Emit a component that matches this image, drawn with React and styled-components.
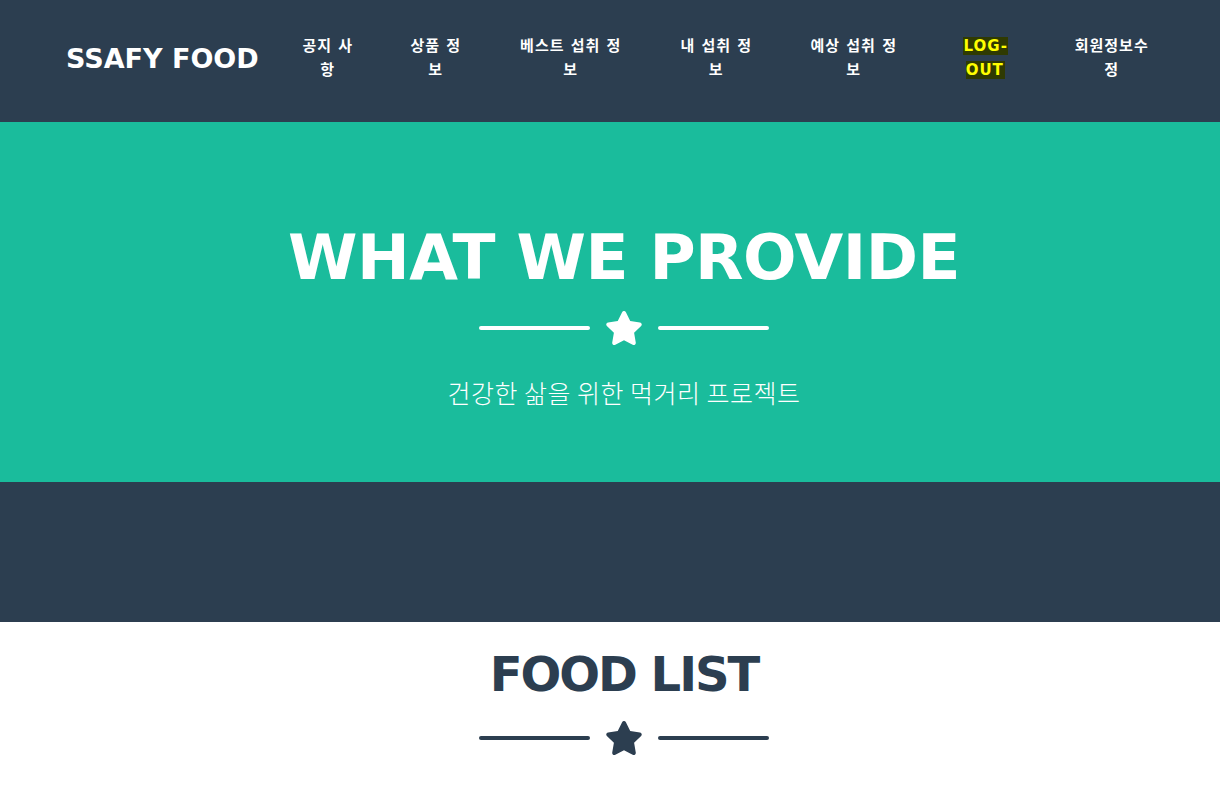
import React from 'react';
import styled, { createGlobalStyle } from 'styled-components';

const GlobalStyle = createGlobalStyle`
    html, body {
        margin: 0;
        padding: 0;
        background: #ffffff;
        overflow-x: hidden;
    }
    body {
        font-family: "DejaVu Sans", "Noto Sans CJK KR", sans-serif;
    }
`;

const Page = styled.div`
    min-width: 1248px;
`;

const Navbar = styled.nav`
    height: 122px;
    background: #2c3e50;
    display: flex;
    align-items: center;
    padding: 0 0 6px 66px;
    box-sizing: border-box;
`;
const Brand = styled.a`
    color: #ffffff;
    font-family: "DejaVu Sans", "Noto Sans CJK KR", sans-serif;
    font-weight: 700;
    font-size: 27px;
    text-decoration: none;
    white-space: nowrap;
    margin-right: 15px;
`;
const NavList = styled.ul`
    display: flex;
    align-items: center;
    list-style: none;
    margin: 0;
    padding: 0;
`;
const NavItem = styled.li`
    padding: 0 ${props => props.pad || 26}px;
`;
const NavLink = styled.a`
    display: block;
    width: ${props => props.w}px;
    text-align: center;
    color: #ffffff;
    font-family: "DejaVu Sans", "Noto Sans CJK KR", sans-serif;
    font-weight: 700;
    font-size: 15px;
    letter-spacing: 1px;
    line-height: 24px;
    text-decoration: none;
`;
const Mark = styled.mark`
    background: #2f3a02;
    color: #ffff00;
    padding: 0 1px;
`;

const Masthead = styled.header`
    background: #1abc9c;
    height: 360px;
    padding-top: 104px;
    box-sizing: border-box;
    text-align: center;
    color: #ffffff;
`;
const MastheadHeading = styled.h1`
    margin: 0;
    font-family: "DejaVu Sans", sans-serif;
    font-weight: 700;
    font-size: 63px;
    line-height: 64px;
    letter-spacing: -0.5px;
`;
const Divider = styled.div`
    display: flex;
    align-items: center;
    justify-content: center;
    margin: ${props => props.m || '21px 0 0'};
`;
const DividerLine = styled.span`
    width: 111px;
    height: 4px;
    border-radius: 4px;
    background: ${props => props.color};
`;
const StarIcon = styled.svg`
    width: 36px;
    height: 34px;
    margin: 0 16px;
    fill: ${props => props.color};
`;
const Subheading = styled.p`
    margin: 30px 0 0;
    font-family: "Noto Sans CJK KR", sans-serif;
    font-weight: 300;
    font-size: 25px;
    line-height: 34px;
    letter-spacing: 0.5px;
`;

const DarkBand = styled.section`
    height: 140px;
    background: #2c3e50;
`;

const Section = styled.section`
    padding-top: 27px;
    text-align: center;
`;
const SectionHeading = styled.h2`
    margin: 0;
    color: #2c3e50;
    font-family: "DejaVu Sans", sans-serif;
    font-weight: 700;
    font-size: 48px;
    line-height: 50px;
    letter-spacing: -2px;
`;

const Star = ({ color }) => (
    <StarIcon color={color} viewBox="20 0 536 512">
        <path d="M259.3 17.8L194 150.2 47.9 171.5c-26.2 3.8-36.7 36.1-17.7 54.6l105.7 103-25 145.5c-4.5 26.3 23.2 46 46.4 33.7L288 439.6l130.7 68.7c23.2 12.2 50.9-7.4 46.4-33.7l-25-145.5 105.7-103c19-18.5 8.5-50.8-17.7-54.6L382 150.2 316.7 17.8c-11.7-23.6-45.6-23.9-57.4 0z" />
    </StarIcon>
);

const StarDivider = ({ color, m }) => (
    <Divider m={m}>
        <DividerLine color={color} />
        <Star color={color} />
        <DividerLine color={color} />
    </Divider>
);

const menus = [
    { label: '공지 사항', w: 56 },
    { label: '상품 정보', w: 56 },
    { label: '베스트 섭취 정보', w: 110 },
    { label: '내 섭취 정보', w: 77 },
    { label: '예상 섭취 정보', w: 94 },
];

const App = () => {
    return (
        <Page>
            <GlobalStyle />
            <Navbar>
                <Brand href="#">SSAFY FOOD</Brand>
                <NavList>
                    {menus.map((menu, index) => (
                        <NavItem key={index}>
                            <NavLink href="#" w={menu.w}>{menu.label}</NavLink>
                        </NavItem>
                    ))}
                    <NavItem pad={28}>
                        <NavLink href="#" w={61}><Mark>LOG-OUT</Mark></NavLink>
                    </NavItem>
                    <NavItem>
                        <NavLink href="#" w={84}>회원정보수정</NavLink>
                    </NavItem>
                </NavList>
            </Navbar>

            <Masthead>
                <MastheadHeading>WHAT WE PROVIDE</MastheadHeading>
                <StarDivider color="#ffffff" />
                <Subheading>건강한 삶을 위한 먹거리 프로젝트</Subheading>
            </Masthead>

            <DarkBand />

            <Section>
                <SectionHeading>FOOD LIST</SectionHeading>
                <StarDivider color="#2c3e50" m="22px 0 0" />
            </Section>
        </Page>
    );
}

export default App;
